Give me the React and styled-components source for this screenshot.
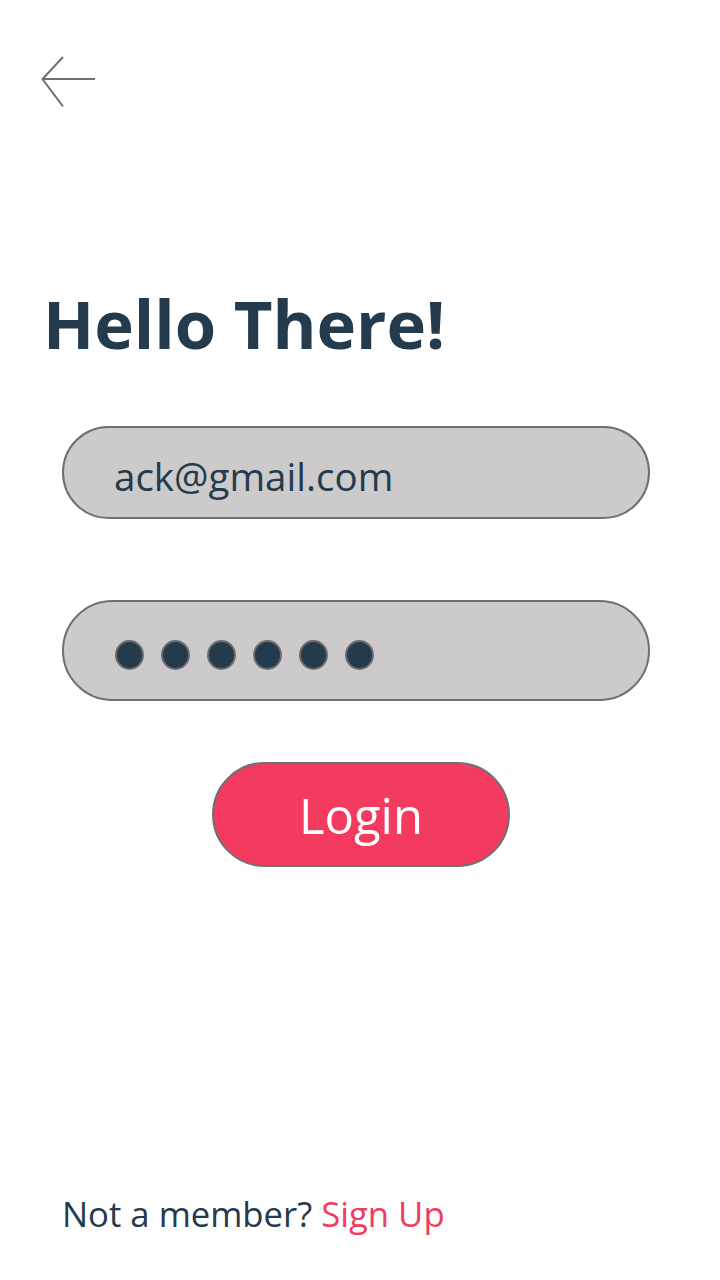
import React from "react";
import styled, { createGlobalStyle } from "styled-components";

const Global = createGlobalStyle`
  html, body { margin: 0; padding: 0; background: #ffffff; }
  body { font-family: "Open Sans", "Noto Sans", sans-serif; }
`;

const Page = styled.div`
  width: 720px;
  height: 1280px;
  box-sizing: border-box;
  display: flex;
  flex-direction: column;
  padding: 56px 0 0 0;
`;

const BackButton = styled.button`
  margin-left: 41px;
  width: 56px;
  height: 52px;
  padding: 0;
  border: none;
  background: transparent;
  display: flex;
  cursor: pointer;
`;

const Title = styled.h1`
  margin: 170px 0 0 43px;
  font-size: 67px;
  font-weight: 700;
  color: #243a4d;
  line-height: 90px;
  letter-spacing: 0;
`;

const Form = styled.form`
  display: flex;
  flex-direction: column;
  align-items: flex-start;
  padding-left: 62px;
  margin-top: 58px;
`;

const Field = styled.div`
  box-sizing: border-box;
  width: 588px;
  height: ${(p) => p.$h}px;
  margin-top: ${(p) => p.$mt}px;
  background: #cccacb;
  border: 2px solid #707070;
  border-radius: 60px;
  display: flex;
  align-items: center;
  padding-left: 51px;
  padding-top: ${(p) => p.$pt || 0}px;
  gap: 17px;
  font-size: 38.5px;
  color: #243a4d;
`;

const EmailText = styled.span`
  margin-left: -1px;
`;

const Dot = styled.span`
  box-sizing: border-box;
  width: 29px;
  height: 30px;
  border-radius: 50%;
  background: #243a4d;
  border: 2px solid #6e6e6e;
  margin-top: 9px;
`;

const LoginButton = styled.button`
  box-sizing: border-box;
  width: 298px;
  height: 105px;
  margin: 61px 0 0 150px;
  background: #f33b60;
  border: 2px solid #707070;
  border-radius: 60px;
  color: #ffffff;
  font-family: "Open Sans", "Noto Sans", sans-serif;
  font-size: 49px;
  padding: 0;
`;

const Footer = styled.p`
  margin: auto 0 43px 62px;
  font-size: 34.7px;
  color: #243a4d;
`;

const SignUp = styled.a`
  color: #f33b60;
  text-decoration: none;
`;

export default function App() {
  return (
    <>
      <Global />
      <Page>
        <BackButton aria-label="Back">
          <svg width="56" height="52" viewBox="0 0 56 52" fill="none">
            <path d="M22 1 L1.5 23 L22 50.5 M1.5 23 L54 23" stroke="#707070" strokeWidth="2" />
          </svg>
        </BackButton>
        <Title>Hello There!</Title>
        <Form>
          <Field $h={93} $mt={0} $pt={6}>
            <EmailText>ack@gmail.com</EmailText>
          </Field>
          <Field $h={101} $mt={81}>
            {[0, 1, 2, 3, 4, 5].map((i) => (
              <Dot key={i} />
            ))}
          </Field>
          <LoginButton type="button">Login</LoginButton>
        </Form>
        <Footer>
          Not a member? <SignUp href="#">Sign Up</SignUp>
        </Footer>
      </Page>
    </>
  );
}
